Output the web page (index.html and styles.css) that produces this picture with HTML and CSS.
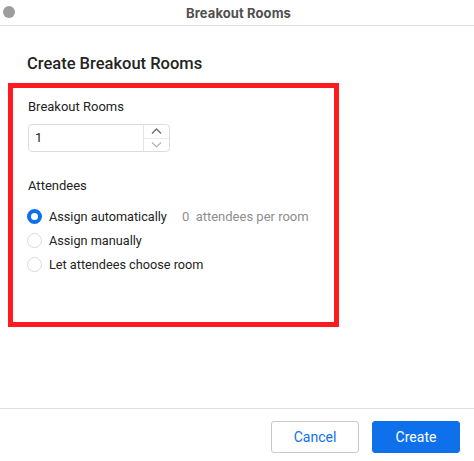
FILE: index.html
```html
<!DOCTYPE html>
<html>
<head>
<meta charset="utf-8">
<link rel="stylesheet" href="styles.css">
</head>
<body>
<div class="window">
  <div class="titlebar">
    <span class="dot"></span>
    <span class="title">Breakout Rooms</span>
    <span></span>
  </div>
  <div class="content">
    <h1 class="heading">Create Breakout Rooms</h1>
    <div class="box">
      <div class="label">Breakout Rooms</div>
      <div class="stepper">
        <div class="value">1</div>
        <div class="arrows">
          <div class="arrow up"><svg width="11" height="6" viewBox="0 0 11 6"><path d="M1 5.5 L5.5 1 L10 5.5" fill="none" stroke="#6e6e6e" stroke-width="1.4"/></svg></div>
          <div class="arrow down"><svg width="11" height="6" viewBox="0 0 11 6"><path d="M1 0.5 L5.5 5 L10 0.5" fill="none" stroke="#b4b4b4" stroke-width="1.2"/></svg></div>
        </div>
      </div>
      <div class="label attendees">Attendees</div>
      <div class="options">
        <div class="option"><span class="radio checked"></span><span class="opt-text">Assign automatically</span><span class="hint">0&nbsp; attendees per room</span></div>
        <div class="option"><span class="radio"></span><span class="opt-text">Assign manually</span></div>
        <div class="option"><span class="radio"></span><span class="opt-text">Let attendees choose room</span></div>
      </div>
    </div>
  </div>
  <div class="footer">
    <button class="btn cancel">Cancel</button>
    <button class="btn create">Create</button>
  </div>
</div>
</body>
</html>
```
FILE: styles.css
```css
* { box-sizing: border-box; }
html, body { margin: 0; padding: 0; background: #fff; }
body {
  font-family: Roboto, "Liberation Sans", Arial, sans-serif;
  color: #232323;
  width: 474px;
  height: 461px;
  overflow: hidden;
}
.window { display: flex; flex-direction: column; height: 461px; }
.titlebar {
  height: 26px;
  border-bottom: 1px solid #dedede;
  display: grid;
  grid-template-columns: 1fr auto 1fr;
  align-items: center;
  padding-left: 3px;
}
.dot {
  width: 12px; height: 12px; border-radius: 50%;
  background: #9d9d9d;
  margin-top: -2px;
}
.title { font-family: Inter, Roboto, sans-serif; font-size: 13px; font-weight: 700; color: #505050; letter-spacing: 0.1px; }
.content { flex: 1; }
.heading {
  margin: 28px 0 0 27px;
  font-size: 16.5px;
  font-weight: 500;
  line-height: 20px;
  color: #232323;
}
.box {
  margin: 9px 0 0 8px;
  width: 331px;
  height: 244px;
  border: 5px solid #ff1a1f;
  padding: 11px 0 0 15px;
}
.label { font-size: 13px; line-height: 16px; color: #232323; }
.stepper {
  margin-top: 9px;
  width: 142px; height: 28px;
  border: 1px solid #dcdcdc;
  border-radius: 4px;
  display: flex;
}
.value { flex: 1; font-size: 13px; line-height: 26px; padding-left: 6px; color: #232323; }
.arrows { width: 26px; border-left: 1px solid #e3e3e3; display: flex; flex-direction: column; }
.arrow { flex: 1; display: flex; align-items: center; justify-content: center; }
.arrow.up { border-bottom: 1px solid #ececec; }
.attendees { margin-top: 26px; }
.options { margin-top: 14px; display: flex; flex-direction: column; gap: 8px; }
.option { display: flex; align-items: center; height: 16px; font-size: 12.7px; }
.radio {
  width: 15px; height: 15px; border-radius: 50%;
  border: 1px solid #dadada;
  margin-left: -1px;
  margin-right: 7px;
  background: #fff;
}
.radio.checked { border: 4px solid #0e71eb; }
.opt-text { color: #232323; }
.hint { color: #8e8e8e; margin-left: 15px; font-size: 13px; }
.footer {
  height: 53px;
  border-top: 1px solid #e0e0e0;
  display: flex;
  justify-content: flex-end;
  align-items: flex-start;
  gap: 13px;
  padding: 12px 14px 0 0;
}
.btn {
  width: 88px; height: 32px;
  border-radius: 3px;
  font-family: Roboto, "Liberation Sans", Arial, sans-serif;
  font-size: 14px;
  cursor: pointer;
}
.cancel { background: #fff; color: #0e71eb; border: 1px solid #c9c9c9; }
.create { background: #0e71eb; color: #fff; border: 1px solid #0e71eb; }
```
